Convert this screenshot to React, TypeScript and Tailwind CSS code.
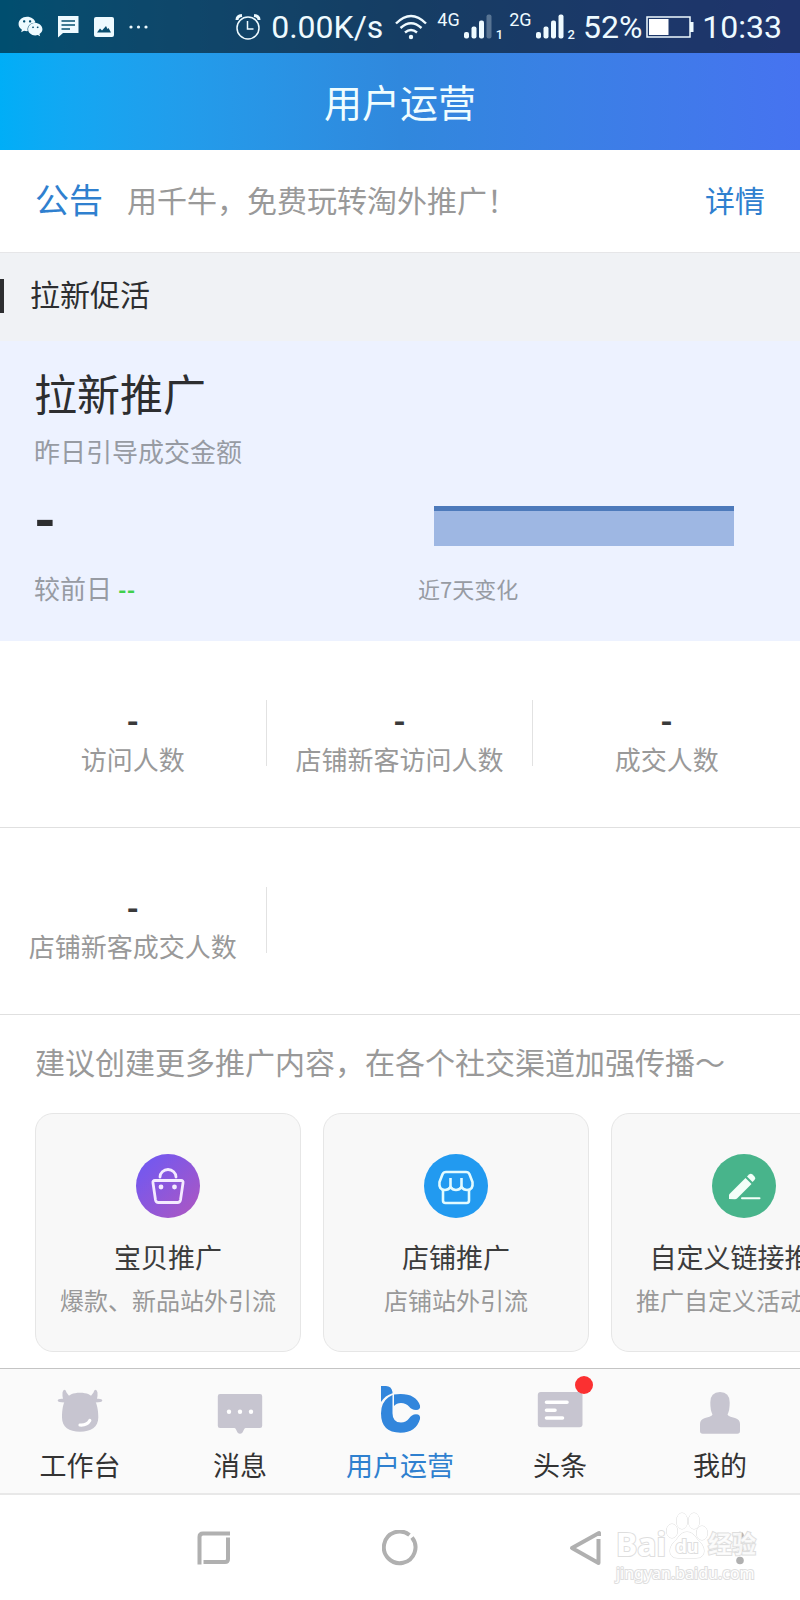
// App.tsx - seller app, user operations page
import { useState } from 'react';
import type { ReactNode } from 'react';
import { FaWeixin } from 'react-icons/fa';

type Stat = { label: string; value: string };
type Channel = { title: string; desc: string; icon: ReactNode };
type Tab = { label: string; icon: ReactNode; badge?: boolean };

// ---------- Status bar icons ----------
const AlarmIcon = () => (
  <svg width="26" height="26" viewBox="0 0 26 26" fill="none" stroke="currentColor">
    <circle cx="13" cy="14" r="11" strokeWidth="1.5" />
    <path d="M12.500 7v8h6" strokeWidth="1.500" />
    <path d="M2 6q0-4 5-4.500M24 6q0-4-5-4.500" strokeWidth="3" />
  </svg>
);

const WifiIcon = () => (
  <svg width="32" height="26" viewBox="0 0 32 26" fill="none" stroke="currentColor" strokeWidth="2.400">
    <path d="M1 9.500Q16-5.500 31 9.500M5.500 14q10.500-9.500 21 0M10 18.500q6-5 12 0" />
    <circle cx="16" cy="23" r="2.200" fill="currentColor" stroke="none" />
  </svg>
);

const SignalIcon = ({ bars }: { bars: number }) => (
  <svg width="28" height="25" viewBox="0 0 28 25" fill="currentColor">
    <rect x="0" y="18" width="5" height="6.500" rx="2" />
    <rect x="7.500" y="12.500" width="5" height="12" rx="2" />
    <rect x="15" y="6.500" width="5" height="18" rx="2" />
    <rect x="22.500" y="0.500" width="5" height="24" rx="2" opacity={bars > 3 ? 1 : 0.3} />
  </svg>
);

const BatteryIcon = () => (
  <svg width="48" height="22" viewBox="0 0 48 22">
    <rect x="1" y="1" width="43" height="20" fill="none" stroke="currentColor" strokeWidth="1.500" />
    <rect x="3" y="3" width="19.500" height="16" fill="white" />
    <rect x="44" y="6" width="3.500" height="10" fill="currentColor" />
  </svg>
);

const NoticeIcon = () => (
  <svg width="21" height="22" viewBox="0 0 21 22">
    <path d="M0 0h20.500v17H5l-5 4.500z" fill="currentColor" />
    <path d="M3.500 5h13.500M3.500 9h13.500M3.500 13h8.500" stroke="#07506f" strokeWidth="1.600" />
  </svg>
);

const PhotoIcon = () => (
  <svg width="20" height="20" viewBox="0 0 20 20">
    <rect width="20" height="20" rx="2" fill="currentColor" />
    <path d="M3 15.500l3-4 2 2 4-4.500 1.500 3 1-1 2.500 4.500z" fill="#0a4f70" />
  </svg>
);

// ---------- Promotion channel icons ----------
const BagIcon = () => (
  <svg width="64" height="64" viewBox="0 0 64 64" fill="none" stroke="#f4eaff" strokeWidth="2.800">
    <defs>
      <linearGradient id="bag" x1="0" y1="0" x2="1" y2="1">
        <stop offset="0.150" stopColor="#7558ee" />
        <stop offset="0.850" stopColor="#a557c8" />
      </linearGradient>
    </defs>
    <circle cx="32" cy="32" r="32" fill="url(#bag)" stroke="none" />
    <path d="M19 26.500h26q2.500 0 2 2.500l-2.500 17q-.5 2.500-3 2.500h-19q-2.500 0-3-2.500L17 29q-.5-2.500 2-2.500z" />
    <path d="M24 23a8 7.500 0 0 1 16 0" strokeLinecap="round" />
    <circle cx="25" cy="33" r="2.400" fill="#f4eaff" stroke="none" />
    <circle cx="38.500" cy="33" r="2.400" fill="#f4eaff" stroke="none" />
  </svg>
);

const ShopIcon = () => (
  <svg width="64" height="64" viewBox="0 0 64 64" fill="none" stroke="#e2fbff" strokeWidth="2.600">
    <circle cx="32" cy="32" r="32" fill="#229af0" stroke="none" />
    <path d="M22 18h20q2.500 0 3.500 2.200l3 7.800q1 8-5.500 8-3.500 0-5.500-3-2 3-5.500 3t-5.500-3q-2 3-5.500 3-6.500 0-5.500-8l3-7.800q1-2.200 3.500-2.200z" />
    <path d="M26.500 33v-9M37.500 33v-9" />
    <path d="M19 36v10.500q0 2.500 2.500 2.500h21q2.500 0 2.500-2.500V36" />
  </svg>
);

const PencilIcon = () => (
  <svg width="64" height="64" viewBox="0 0 64 64" fill="#f3fff9">
    <circle cx="32" cy="32" r="32" fill="#48b48b" />
    <path d="M17 45v-4.500L33.500 24l6 6L25 44.500q-.8.700-2 .7z" />
    <path d="M35 22.500l2-2q1.700-1.700 3.500 0l2 2q1.700 1.700 0 3.500l-2 2z" />
    <path d="M30 44.200h17.500" stroke="#f3fff9" strokeWidth="2" strokeLinecap="round" />
  </svg>
);

// ---------- Tab bar icons ----------
const BullIcon = () => (
  <svg width="48" height="52" viewBox="0 0 48 52" fill="#c7c5d0">
    <path d="M24 8.700c7 0 11.500 2 14 6.300 3 4 4.300 11 4.300 18.500C42.300 43 35 47.700 24 47.700S6 43 6 33.500C6 26 7 19 10 15c2.500-4.300 7-6.300 14-6.300z" />
    <path d="M8.500 5.800q1.500.2 2 2.700l3 4-5 6Q2 18.200 1.700 16.800q-.2-2.300 5.300-2Q6.200 12.500 6.500 8.500q.5-2.700 2-2.700z" />
    <path d="M39.500 5.800q-1.500.2-2 2.700l-3 4 5 6q6.500-.3 6.800-1.700.2-2.300-5.300-2 .8-2.300.5-6.300-.5-2.700-2-2.700z" />
    <path d="M24 41q7 .5 9.800-4.500" fill="none" stroke="#fff" strokeWidth="3.200" strokeLinecap="round" />
  </svg>
);

const MessageIcon = () => (
  <svg width="48" height="52" viewBox="0 0 48 52" fill="#c7c5d0">
    <path d="M4 10h40q2.200 0 2.200 2.200v29.600q0 2.200-2.200 2.200H29.500q-1 0-1.500 1.500l-1.500 3q-2.500 2.500-5 0l-1.500-3q-.5-1.500-1.500-1.500H4q-2.200 0-2.200-2.200V12.200Q1.800 10 4 10z" />
    <g fill="#fff">
      <circle cx="13" cy="27.700" r="2.200" />
      <circle cx="24" cy="27.700" r="2.200" />
      <circle cx="35" cy="27.700" r="2.200" />
    </g>
  </svg>
);

const OperateIcon = () => (
  <svg width="48" height="52" viewBox="0 0 48 52" fill="none">
    <path d="M5 2h5q5.500 0 6.500 6v1.200Q9 11.500 5 18z" fill="#3286dc" />
    <path
      d="M5 29.300Q5 18.500 12.500 13.200l4-2.200v18.300q0 9.200 8.500 9.200 5 0 8-4 2.500-4 7-4.200 4.800.2 4 4.700Q40 48.700 24.500 48.700 5 48.700 5 29.300z"
      fill="#3286dc"
    />
    <path
      d="M18 10.500Q21 10 24.500 10 40 10 44 21.500q.8 4.300-4 4.500-4.500-.2-7-3.500-3-3.500-8-3.500-4.500 0-7 3z"
      fill="#3286dc"
    />
  </svg>
);

const HeadlineIcon = () => (
  <svg width="48" height="52" viewBox="0 0 48 52">
    <rect x="1.800" y="8" width="44.700" height="35.300" rx="3" fill="#c7c5d0" />
    <path d="M10.500 18.200h20.500M10.500 26.300h8.500M10.500 34h16" stroke="#fff" strokeWidth="3.600" strokeLinecap="round" />
  </svg>
);

const PersonIcon = () => (
  <svg width="48" height="52" viewBox="0 0 48 52" fill="#c7c5d0">
    <path d="M24 8q9.700 0 9.700 10.500 0 8-2.200 12 .5 1.500 3 2.200l4.500 1.300q5 1.500 5 6v7q0 2.700-2.700 2.700H6.700Q4 49.700 4 47v-7q0-4.500 5-6l4.500-1.300q2.500-.7 3-2.200-2.200-4-2.200-12Q14.300 8 24 8z" />
  </svg>
);

// ---------- Data ----------
const stats: Stat[] = [
  { label: '访问人数', value: '-' },
  { label: '店铺新客访问人数', value: '-' },
  { label: '成交人数', value: '-' },
  { label: '店铺新客成交人数', value: '-' },
];
const statRows: Stat[][] = [stats.slice(0, 3), stats.slice(3)];

const channels: Channel[] = [
  { title: '宝贝推广', desc: '爆款、新品站外引流', icon: <BagIcon /> },
  { title: '店铺推广', desc: '店铺站外引流', icon: <ShopIcon /> },
  { title: '自定义链接推广', desc: '推广自定义活动页面', icon: <PencilIcon /> },
];

const tabs: Tab[] = [
  { label: '工作台', icon: <BullIcon /> },
  { label: '消息', icon: <MessageIcon /> },
  { label: '用户运营', icon: <OperateIcon /> },
  { label: '头条', icon: <HeadlineIcon />, badge: true },
  { label: '我的', icon: <PersonIcon /> },
];

// ---------- Sections ----------
const StatusBar = () => (
  <div className="flex h-[53px] items-center justify-between bg-black/55 px-[18px] font-[Roboto,sans-serif] text-[32px] leading-none text-[#eefaff]">
    <div className="flex items-center gap-[15px]">
      <FaWeixin size={25} />
      <NoticeIcon />
      <PhotoIcon />
      <svg width="20" height="4" viewBox="0 0 20 4" fill="currentColor">
        <circle cx="2" cy="2" r="1.600" />
        <circle cx="9.500" cy="2" r="1.600" />
        <circle cx="17" cy="2" r="1.600" />
      </svg>
    </div>
    <div className="flex items-center">
      <AlarmIcon />
      <span className="ml-2.5">0.00K/s</span>
      <span className="ml-3"><WifiIcon /></span>
      <span className="ml-2.5 self-start text-lg leading-none">4G</span>
      <span className="ml-1"><SignalIcon bars={3} /></span>
      <span className="ml-1 self-end text-[13px] font-medium leading-4">1</span>
      <span className="ml-1.5 self-start text-lg leading-none">2G</span>
      <span className="ml-1"><SignalIcon bars={4} /></span>
      <span className="ml-1 self-end text-[13px] font-medium leading-4">2</span>
      <span className="ml-2">52%</span>
      <span className="ml-1"><BatteryIcon /></span>
      <span className="ml-2">10:33</span>
    </div>
  </div>
);

const Overview = () => (
  <section className="flex bg-[#edf2ff] px-[34px] pt-[21px] pb-[33px]">
    <div className="flex-1">
      <h3 className="text-[43px] leading-[60px] text-[#2d2e30]">拉新推广</h3>
      <p className="mt-[9px] text-[26px] leading-10 text-[#979ba3]">昨日引导成交金额</p>
      <p className="mt-5 font-[Roboto,sans-serif] text-[56px] font-bold leading-[60px] text-[#2d2e30]">-</p>
      <p className="mt-[17px] flex items-baseline gap-1.5 text-[26px] leading-10 text-[#979ba3]">
        较前日
        <span className="font-[Roboto,sans-serif] text-[22px] font-bold leading-none text-[#3fd04c]">--</span>
      </p>
    </div>
    <figure className="flex flex-1 flex-col justify-end">
      <div className="mr-8 ml-[34px] h-10 border-t-[5px] border-[#4d7abb] bg-[#9eb7e3]" />
      <figcaption className="mt-[22px] ml-[18px] text-[22px] leading-10 text-[#979ba3]">
        近7天变化
      </figcaption>
    </figure>
  </section>
);

const StatRow = ({ items }: { items: Stat[] }) => (
  <div className="grid grid-cols-3 border-b border-[#e0e0e0] pt-[59px] pb-[53px]">
    {items.map((s, i) => (
      <div key={s.label} className="flex items-start">
        <div className="flex-1 text-center">
          <p className="font-[Roboto,sans-serif] text-[32px] font-bold leading-11 text-[#3a3a3a]">{s.value}</p>
          <p className="text-[26px] leading-[30px] whitespace-nowrap text-[#999]">{s.label}</p>
        </div>
        {i < 2 && <div className="h-[66px] w-px bg-[#e2e2e2]" />}
      </div>
    ))}
  </div>
);

const Watermark = () => (
  <div className="pointer-events-none absolute right-[44px] bottom-[17px] font-['Noto_Sans','Noto_Sans_CJK_SC',sans-serif] leading-none text-white [paint-order:stroke] [-webkit-text-stroke:2px_#dedede]">
    <div className="flex items-end text-[32px] font-bold leading-[30px]">
      <span>Bai</span>
      <div className="relative">
        <svg width="42" height="47" viewBox="0 0 42 47" fill="white" stroke="#dcdcdc" strokeWidth="1">
          <ellipse cx="6" cy="19" rx="5.500" ry="7" />
          <ellipse cx="16" cy="9" rx="5.500" ry="8" />
          <ellipse cx="28" cy="9" rx="5.500" ry="8" />
          <ellipse cx="36" cy="21" rx="5.500" ry="7" />
          <path d="M21 20q6 0 10 7 7 6 7 12 0 7-8 7H12q-8 0-8-7 0-6 7-12 4-7 10-7z" />
        </svg>
        <span className="absolute inset-x-0 bottom-1 text-center text-lg leading-none">du</span>
      </div>
      <span className="text-[24px] text-white/80">经验</span>
    </div>
    <p className="mt-1 text-[16px] leading-5">jingyan.baidu.com</p>
  </div>
);

const SystemNav = () => (
  <nav className="relative grid h-[105px] grid-cols-[1fr_auto_1fr] items-center bg-white text-[#b0b0b0]">
    <div className="flex justify-end pr-[150px]">
      <button type="button" aria-label="最近任务">
        <svg width="36" height="36" viewBox="0 0 36 36" fill="none" stroke="currentColor" strokeWidth="4">
          <path d="M3.500 34.500V7q0-3.500 3.500-3.500h27M32 7.500V29q0 3-3 3H7.500" />
        </svg>
      </button>
    </div>
    <button type="button" aria-label="主页">
      <svg width="36" height="36" viewBox="0 0 36 36" fill="none" stroke="currentColor" strokeWidth="4">
        <path d="M30 7.500a15.800 15.800 0 1 1-2.500-2.500" />
      </svg>
    </button>
    <div className="flex items-center justify-between pr-[50px] pl-[150px]">
      <button type="button" aria-label="返回">
        <svg width="36" height="36" viewBox="0 0 36 36" fill="none" stroke="currentColor" strokeWidth="4" strokeLinejoin="round">
          <path d="M30.500 9V33L4 18 31 3v3" />
        </svg>
      </button>
      <button type="button" aria-label="更多">
        <svg width="20" height="36" viewBox="0 0 20 36" fill="currentColor">
          <circle cx="10" cy="5.500" r="3.800" />
          <circle cx="10" cy="18" r="3.800" />
          <circle cx="10" cy="30.500" r="3.800" />
        </svg>
      </button>
    </div>
    <Watermark />
  </nav>
);

const App: React.FC = () => {
  const [activeTab, setActiveTab] = useState<string>('用户运营');

  return (
    <div className="flex min-h-screen flex-col overflow-hidden bg-white font-['Noto_Sans_CJK_SC',sans-serif]">
      {/* Header */}
      <header className="bg-linear-to-r from-[#00aef7] via-[#3088dd] to-[#4673f0]">
        <StatusBar />
        <h1 className="pt-5 pb-[21px] text-center text-[38px] leading-14 text-[#effdff]">用户运营</h1>
      </header>

      {/* Notice */}
      <div className="flex items-center border-b border-[#e6e6e8] px-[35px] pt-[19px] pb-[23px]">
        <span className="text-[34px] leading-15 text-[#2f80cf]">公告</span>
        <p className="ml-6 flex-1 text-[30px] leading-15 text-[#999]">用千牛，免费玩转淘外推广！</p>
        <a href="#detail" className="text-[30px] leading-15 text-[#2f80cf]">详情</a>
      </div>

      <main className="flex-1">
        <div className="flex items-end bg-[#f0f2f5] pt-5 pb-7">
          <span className="h-[34px] w-1 bg-[#2d2e30]" />
          <h2 className="ml-[26px] text-[30px] leading-10 text-[#2d2e30]">拉新促活</h2>
        </div>

        <Overview />

        {statRows.map((items) => (
          <StatRow key={items[0].label} items={items} />
        ))}

        {/* Promotion channels */}
        <p className="mt-[22px] pl-[35px] text-[30px] leading-12 whitespace-nowrap text-[#999]">
          建议创建更多推广内容，在各个社交渠道加强传播～
        </p>
        <div className="mt-7 mb-4 flex gap-[22px] overflow-x-auto pl-[35px] [scrollbar-width:none]">
          {channels.map((c) => (
            <button
              key={c.title}
              type="button"
              className="flex w-[266px] shrink-0 flex-col items-center rounded-[18px] border border-[#e6e6e6] bg-[#f8f8f8] pt-10 pb-[30px]"
            >
              {c.icon}
              <span className="mt-[17px] text-[27px] leading-11 text-[#3c3c3c]">{c.title}</span>
              <span className="text-[24px] leading-[42px] text-[#999]">{c.desc}</span>
            </button>
          ))}
        </div>
      </main>

      {/* Tab bar */}
      <nav className="grid grid-cols-5 border-t border-b-2 border-t-[#c4c4c4] border-b-[#e8e8e8] bg-[#fafafa] pt-[15px] pb-[7px]">
        {tabs.map((tab) => (
          <button
            key={tab.label}
            type="button"
            onClick={() => setActiveTab(tab.label)}
            className="flex flex-col items-center"
          >
            <span className="relative">
              {tab.icon}
              {tab.badge && (
                <span className="absolute -top-2 -right-[9px] size-[18px] rounded-full bg-[#fb3031]" />
              )}
            </span>
            <span
              className={`mt-2 text-[27px] leading-[42px] ${
                activeTab === tab.label ? 'text-[#2f80cf]' : 'text-[#333]'
              }`}
            >
              {tab.label}
            </span>
          </button>
        ))}
      </nav>

      <SystemNav />
    </div>
  );
};

export default App;
